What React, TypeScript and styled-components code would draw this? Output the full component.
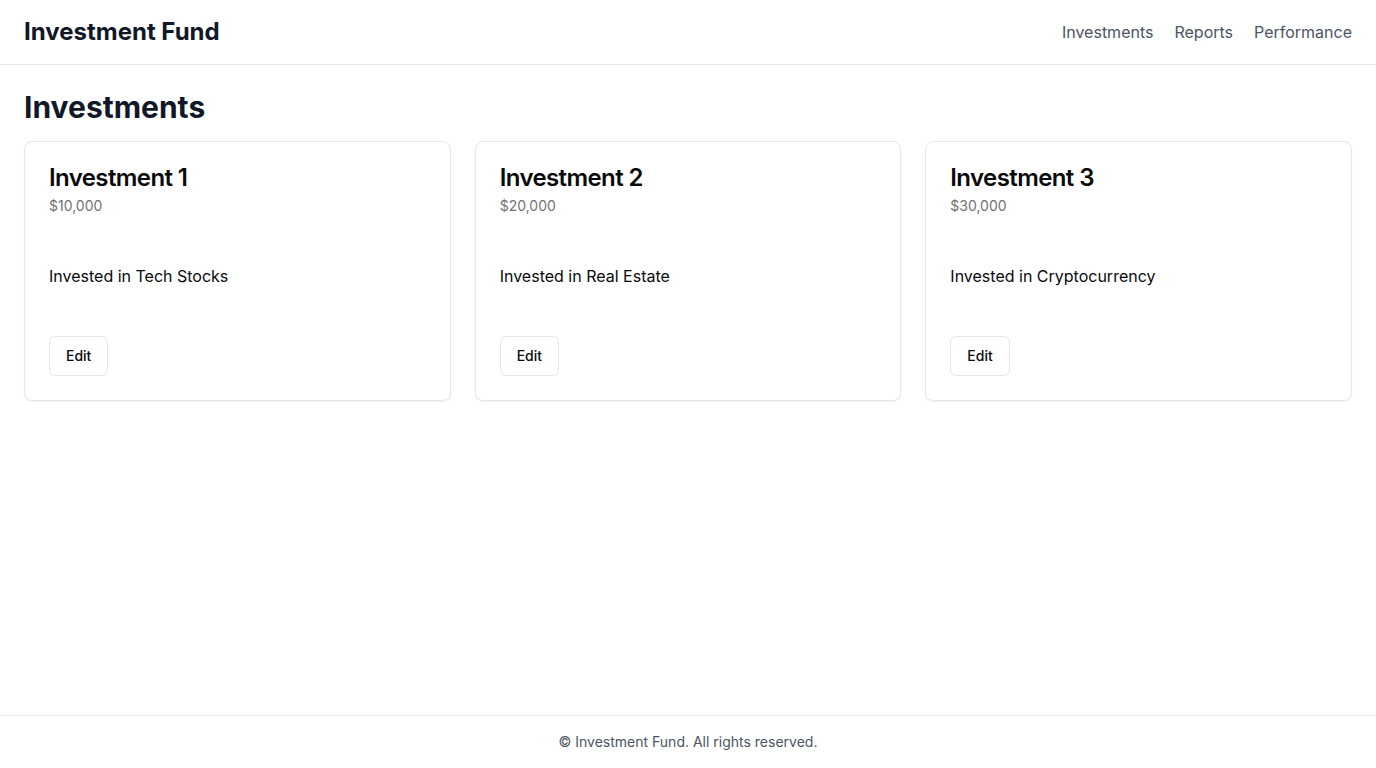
import React from "react";
import styled, { createGlobalStyle } from "styled-components";

const GlobalStyle = createGlobalStyle`
  * { box-sizing: border-box; }
  html, body { margin: 0; padding: 0; }
  body {
    font-family: Inter, "Noto Sans", "Liberation Sans", sans-serif;
    background: #ffffff;
    color: #0a0a0a;
    -webkit-font-smoothing: antialiased;
  }
`;

const Page = styled.div`
  min-height: 100vh;
  display: flex;
  flex-direction: column;
`;

const Header = styled.header`
  display: flex;
  align-items: center;
  justify-content: space-between;
  padding: 16px 24px;
  border-bottom: 1px solid #e5e7eb;
`;

const Brand = styled.h1`
  margin: 0;
  font-size: 24px;
  line-height: 32px;
  font-weight: 700;
  color: #111827;
`;

const Nav = styled.nav`
  display: flex;
  gap: 21px;
`;

const NavLink = styled.a`
  font-size: 16px;
  line-height: 24px;
  color: #4b5563;
  text-decoration: none;
  cursor: pointer;
`;

const Main = styled.main`
  flex: 1;
  padding: 24px;
`;

const PageTitle = styled.h2`
  margin: 0 0 16px;
  font-size: 30px;
  line-height: 36px;
  font-weight: 700;
  color: #111827;
`;

const Grid = styled.div`
  display: grid;
  grid-template-columns: repeat(3, 1fr);
  gap: 24px;
`;

const Card = styled.div`
  border: 1px solid #e5e7eb;
  border-radius: 8px;
  background: #fff;
  box-shadow: 0 1px 2px rgba(0, 0, 0, 0.05);
`;

const CardHeader = styled.div`
  display: flex;
  flex-direction: column;
  gap: 6px;
  padding: 24px;
`;

const CardTitle = styled.h3`
  margin: 0;
  font-size: 24px;
  line-height: 24px;
  font-weight: 600;
  letter-spacing: -0.025em;
  color: #0a0a0a;
`;

const CardDescription = styled.p`
  margin: 0;
  font-size: 14px;
  line-height: 20px;
  color: #737373;
`;

const CardContent = styled.div`
  padding: 24px;
  font-size: 16px;
  line-height: 24px;
  color: #0a0a0a;
`;

const CardFooter = styled.div`
  display: flex;
  align-items: center;
  padding: 24px;
`;

const Button = styled.button`
  display: inline-flex;
  align-items: center;
  justify-content: center;
  height: 40px;
  padding: 0 16px;
  border: 1px solid #e5e5e5;
  border-radius: 6px;
  background: #fff;
  font-family: inherit;
  font-size: 14px;
  line-height: 20px;
  font-weight: 500;
  color: #0a0a0a;
  cursor: pointer;
`;

const Footer = styled.footer`
  border-top: 1px solid #e5e7eb;
  padding: 16px 24px;
  text-align: center;
  font-size: 14px;
  line-height: 20px;
  color: #4b5563;
`;

const investments = [
  { title: "Investment 1", amount: "$10,000", desc: "Invested in Tech Stocks" },
  { title: "Investment 2", amount: "$20,000", desc: "Invested in Real Estate" },
  { title: "Investment 3", amount: "$30,000", desc: "Invested in Cryptocurrency" },
];

export default function App() {
  return (
    <>
      <GlobalStyle />
      <Page>
        <Header>
          <Brand>Investment Fund</Brand>
          <Nav>
            <NavLink>Investments</NavLink>
            <NavLink>Reports</NavLink>
            <NavLink>Performance</NavLink>
          </Nav>
        </Header>
        <Main>
          <PageTitle>Investments</PageTitle>
          <Grid>
            {investments.map((inv) => (
              <Card key={inv.title}>
                <CardHeader>
                  <CardTitle>{inv.title}</CardTitle>
                  <CardDescription>{inv.amount}</CardDescription>
                </CardHeader>
                <CardContent>{inv.desc}</CardContent>
                <CardFooter>
                  <Button>Edit</Button>
                </CardFooter>
              </Card>
            ))}
          </Grid>
        </Main>
        <Footer>© Investment Fund. All rights reserved.</Footer>
      </Page>
    </>
  );
}
